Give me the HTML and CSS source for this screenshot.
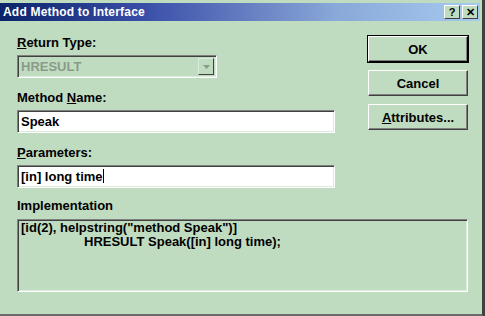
FILE: index.html
```html
<!DOCTYPE html>
<html lang="en">
<head>
  <meta charset="UTF-8" />
  <title>Add Method to Interface</title>
  <link rel="stylesheet" href="styles.css">
</head>
<body>
  <div class="window">
    <div class="titlebar">
      <span class="title">Add Method to Interface</span>
      <div class="title-btns">
        <span class="tbtn">?</span>
        <span class="tbtn">&#x2715;</span>
      </div>
    </div>

    <div class="content">
      <div class="top">
        <!-- Поля слева -->
        <div class="fields">
          <label class="lbl"><u>R</u>eturn Type:</label>
          <div class="combo">
            <span class="combo-text">HRESULT</span>
            <span class="combo-btn">
              <svg width="7" height="4" viewBox="0 0 7 4"><path d="M0 0h7L3.5 4z" fill="#8a9a8a"/></svg>
            </span>
          </div>

          <label class="lbl">Method <u>N</u>ame:</label>
          <div class="field">Speak</div>

          <label class="lbl"><u>P</u>arameters:</label>
          <div class="field">[in] long time<span class="caret"></span></div>
        </div>

        <!-- Кнопки -->
        <div class="buttons">
          <button class="btn default">OK</button>
          <button class="btn">Cancel</button>
          <button class="btn"><u>A</u>ttributes...</button>
        </div>
      </div>

      <label class="lbl impl-lbl">Implementation</label>
      <div class="impl">
        <div>[id(2), helpstring("method Speak")]</div>
        <div class="indent">HRESULT Speak([in] long time);</div>
      </div>
    </div>
  </div>
</body>
</html>
```

FILE: styles.css
```css
body {
  margin: 0;
  background: #c0dcc0;
  font-family: "Liberation Sans", Arial, sans-serif;
  font-size: 13px;
  font-weight: bold;
  color: #000;
}

.window {
  width: 482px;
  height: 311px;
  border-right: 3px solid #404040;
  border-bottom: 5px solid #6a6a6a;
  padding-top: 3px;
  box-sizing: content-box;
  display: flex;
  flex-direction: column;
}

.titlebar {
  height: 18px;
  margin-right: 2px;
  background: linear-gradient(to right, #0a246a 0%, #3a4ea8 30%, #8aa8d8 70%, #a6caf0 100%);
  display: flex;
  align-items: center;
  justify-content: space-between;
  padding-left: 3px;
}

.title {
  color: #fff;
  font-size: 12px;
  letter-spacing: 0.2px;
}

.title-btns {
  display: flex;
  gap: 2px;
  padding-right: 2px;
}

.tbtn {
  width: 14px;
  height: 12px;
  background: #c0dcc0;
  border: 1px solid;
  border-color: #fff #404040 #404040 #fff;
  font-size: 11px;
  line-height: 12px;
  text-align: center;
  color: #000;
}

.content {
  padding: 14px 16px 0 17px;
}

.top {
  display: flex;
  justify-content: space-between;
}

.fields {
  width: 318px;
  display: flex;
  flex-direction: column;
}

.lbl {
  display: block;
  height: 16px;
  line-height: 16px;
}

.fields .lbl {
  margin-bottom: 4px;
}

.combo,
.field,
.impl {
  box-sizing: border-box;
  border: 1px solid;
  border-color: #808080 #fff #fff #808080;
  box-shadow: inset 1px 1px 0 #404040, inset -1px -1px 0 #dcecdc;
}

.combo {
  width: 200px;
  height: 23px;
  display: flex;
  align-items: center;
  justify-content: space-between;
  padding: 0 2px 0 3px;
  margin-bottom: 12px;
  background: #c0dcc0;
}

.combo-text {
  color: #8a9a8a;
}

.combo-btn {
  width: 16px;
  height: 17px;
  box-sizing: border-box;
  border: 1px solid;
  border-color: #dcecdc #404040 #404040 #dcecdc;
  display: flex;
  align-items: center;
  justify-content: center;
}

.field {
  height: 23px;
  background: #fff;
  padding: 0 3px;
  line-height: 21px;
  margin-bottom: 12px;
}

.caret {
  display: inline-block;
  width: 1px;
  height: 14px;
  background: #000;
  vertical-align: -2px;
}

.buttons {
  display: flex;
  flex-direction: column;
  gap: 8px;
  margin-top: 1px;
  margin-right: -2px;
}

.btn {
  width: 100px;
  height: 26px;
  background: #c0dcc0;
  font: inherit;
  color: #000;
  border: 1px solid;
  border-color: #fff #404040 #404040 #fff;
  box-shadow: inset -1px -1px 0 #808080;
  padding: 0;
}

.btn.default {
  outline: 1px solid #000;
  outline-offset: 0;
  border-color: #fff #000 #000 #fff;
}

.impl-lbl {
  margin-top: -2px;
  margin-bottom: 5px;
}

.impl {
  width: 451px;
  height: 73px;
  padding: 1px 3px;
  background: #c0dcc0;
  line-height: 14px;
}

.indent {
  padding-left: 63px;
}
```
